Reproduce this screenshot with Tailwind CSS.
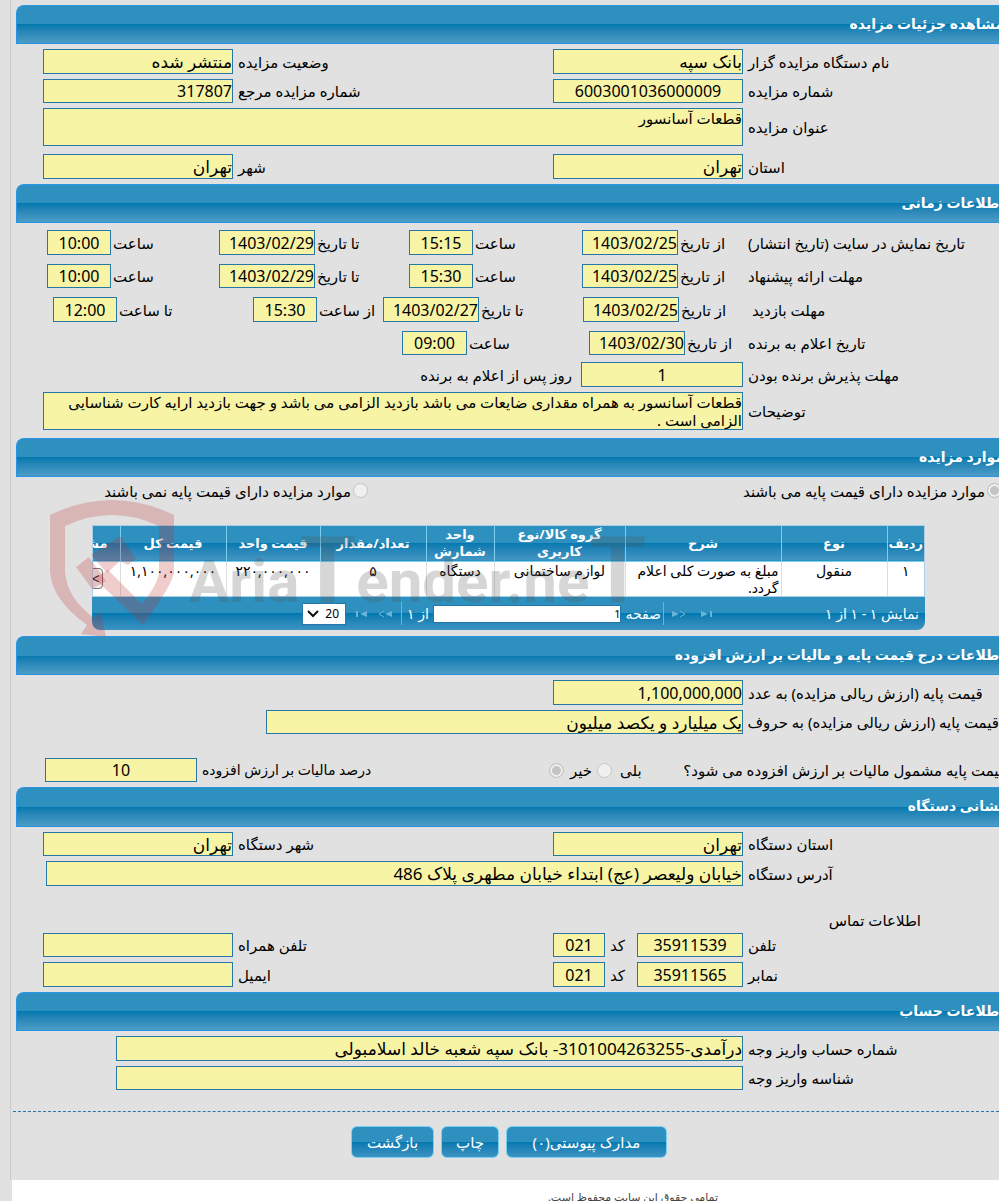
<!DOCTYPE html>
<html lang="fa">
<head>
    <meta charset="UTF-8">
    <meta name="viewport" content="width=device-width, initial-scale=1.0">
    <title>مشاهده جزئیات مزایده</title>
    <script src="https://cdn.jsdelivr.net/npm/@tailwindcss/browser@4"></script>
</head>
<body class="bg-[#e1e1e1] overflow-x-hidden text-black text-[15px] leading-5 font-['Noto_Sans','DejaVu_Sans',sans-serif]">
    <main class="ml-[10px] border-l border-[#c8c8c8] pt-[5px] pl-[5px]">

        <!-- Detail -->
        <section dir="rtl">
            <h2 class="h-[39px] rounded-tl-lg border border-r-0 border-[#2a94e4] bg-linear-to-b from-[#2e90bf] from-50% via-[#0079b0] via-50% to-[#4a9cc5] text-white text-sm font-bold leading-9"><span class="block -mr-[5px]">مشاهده جزئیات مزایده</span></h2>
            <div class="flex flex-col gap-[5px] pt-[5px] pb-[5px] pl-[27px]">
                <div class="flex items-center gap-[5px]">
                    <label for="org" class="w-[251px] shrink-0 text-left whitespace-nowrap">نام دستگاه مزایده گزار</label>
                    <input id="org" readonly value="بانک سپه" class="w-[190px] h-[25px] bg-[#f7f4a5] border border-[#2676a8] text-[17px]">
                    <label for="status" class="flex-1 text-left">وضعیت مزایده</label>
                    <input id="status" readonly value="منتشر شده" class="w-[190px] h-[25px] bg-[#f7f4a5] border border-[#2676a8] text-[17px]">
                </div>
                <div class="flex items-center gap-[5px]">
                    <label for="number" class="w-[251px] shrink-0 text-left whitespace-nowrap">شماره مزایده</label>
                    <input id="number" readonly value="6003001036000009" class="w-[190px] h-[24px] bg-[#f7f4a5] border border-[#2676a8] text-base text-center">
                    <label for="ref" class="flex-1 text-left">شماره مزایده مرجع</label>
                    <input id="ref" readonly value="317807" class="w-[190px] h-[24px] bg-[#f7f4a5] border border-[#2676a8] text-base">
                </div>
                <div class="flex items-center gap-[5px]">
                    <label for="title" class="w-[251px] shrink-0 text-left whitespace-nowrap">عنوان مزایده</label>
                    <textarea id="title" readonly class="flex-1 h-[38px] bg-[#f7f4a5] border border-[#2676a8] resize-none overflow-hidden leading-[18px]">قطعات آسانسور</textarea>
                </div>
                <div class="flex items-center gap-[5px] pt-[3px]">
                    <label for="province" class="w-[251px] shrink-0 text-left whitespace-nowrap">استان</label>
                    <input id="province" readonly value="تهران" class="w-[190px] h-[25px] bg-[#f7f4a5] border border-[#2676a8] text-[17px]">
                    <label for="city" class="flex-1 text-left">شهر</label>
                    <input id="city" readonly value="تهران" class="w-[190px] h-[25px] bg-[#f7f4a5] border border-[#2676a8] text-[17px]">
                </div>
            </div>
        </section>

        <!-- Dates -->
        <section dir="rtl">
            <h2 class="h-[39px] rounded-tl-lg border border-r-0 border-[#2a94e4] bg-linear-to-b from-[#2e90bf] from-50% via-[#0079b0] via-50% to-[#4a9cc5] text-white text-sm font-bold leading-9"><span class="block -mr-[5px]">اطلاعات زمانی</span></h2>
            <div class="pt-[7px] pb-2 pl-[27px]">
                <div class="flex items-center h-[25px] mb-[9px]">
                    <span class="w-[251px] shrink-0 text-left whitespace-nowrap">تاریخ نمایش در سایت (تاریخ انتشار)</span>
                    <label for="pub-from" class="w-[70px] pl-[2px] text-left">از تاریخ</label>
                    <input id="pub-from" readonly value="1403/02/25" class="w-[96px] h-[25px] bg-[#f7f4a5] border border-[#2676a8] text-base">
                    <label for="pub-from-time" class="w-[109px] pl-[2px] text-left">ساعت</label>
                    <input id="pub-from-time" readonly value="15:15" class="w-[64px] h-[25px] bg-[#f7f4a5] border border-[#2676a8] text-base text-center">
                    <label for="pub-to" class="w-[94px] pl-[2px] text-left">تا تاریخ</label>
                    <input id="pub-to" readonly value="1403/02/29" class="w-[96px] h-[25px] bg-[#f7f4a5] border border-[#2676a8] text-base">
                    <label for="pub-to-time" class="w-[108px] pl-[2px] text-left">ساعت</label>
                    <input id="pub-to-time" readonly value="10:00" class="w-[64px] h-[25px] bg-[#f7f4a5] border border-[#2676a8] text-base text-center">
                </div>
                <div class="flex items-center h-[24px] mb-[9px]">
                    <span class="w-[251px] shrink-0 text-left whitespace-nowrap">مهلت ارائه پیشنهاد</span>
                    <label for="bid-from" class="w-[70px] pl-[2px] text-left">از تاریخ</label>
                    <input id="bid-from" readonly value="1403/02/25" class="w-[96px] h-[24px] bg-[#f7f4a5] border border-[#2676a8] text-base">
                    <label for="bid-from-time" class="w-[109px] pl-[2px] text-left">ساعت</label>
                    <input id="bid-from-time" readonly value="15:30" class="w-[64px] h-[24px] bg-[#f7f4a5] border border-[#2676a8] text-base text-center">
                    <label for="bid-to" class="w-[94px] pl-[2px] text-left">تا تاریخ</label>
                    <input id="bid-to" readonly value="1403/02/29" class="w-[96px] h-[24px] bg-[#f7f4a5] border border-[#2676a8] text-base">
                    <label for="bid-to-time" class="w-[108px] pl-[2px] text-left">ساعت</label>
                    <input id="bid-to-time" readonly value="10:00" class="w-[64px] h-[24px] bg-[#f7f4a5] border border-[#2676a8] text-base text-center">
                </div>
                <div class="flex items-center h-[25px] mb-[9px]">
                    <span class="w-[251px] shrink-0 pl-1 text-left whitespace-nowrap">مهلت بازدید</span>
                    <label for="visit-from" class="w-[69px] pl-[2px] text-left">از تاریخ</label>
                    <input id="visit-from" readonly value="1403/02/25" class="w-[96px] h-[25px] bg-[#f7f4a5] border border-[#2676a8] text-base">
                    <label for="visit-to" class="w-[104px] pl-[2px] text-left">تا تاریخ</label>
                    <input id="visit-to" readonly value="1403/02/27" class="w-[96px] h-[25px] bg-[#f7f4a5] border border-[#2676a8] text-base">
                    <label for="visit-from-time" class="w-[66px] pl-[2px] text-left">از ساعت</label>
                    <input id="visit-from-time" readonly value="15:30" class="w-[64px] h-[25px] bg-[#f7f4a5] border border-[#2676a8] text-base text-center">
                    <label for="visit-to-time" class="w-[136px] pl-[2px] text-left">تا ساعت</label>
                    <input id="visit-to-time" readonly value="12:00" class="w-[64px] h-[25px] bg-[#f7f4a5] border border-[#2676a8] text-base text-center">
                </div>
                <div class="flex items-center h-[24px] mb-[7px]">
                    <span class="w-[251px] shrink-0 text-left whitespace-nowrap">تاریخ اعلام به برنده</span>
                    <label for="win-from" class="w-[63px] pl-[2px] text-left">از تاریخ</label>
                    <input id="win-from" readonly value="1403/02/30" class="w-[96px] h-[24px] bg-[#f7f4a5] border border-[#2676a8] text-base">
                    <label for="win-time" class="w-[122px] pl-[2px] text-left">ساعت</label>
                    <input id="win-time" readonly value="09:00" class="w-[65px] h-[24px] bg-[#f7f4a5] border border-[#2676a8] text-base text-center">
                </div>
                <div class="flex items-center gap-[5px] mb-[5px]">
                    <label for="accept" class="w-[251px] shrink-0 text-left whitespace-nowrap">مهلت پذیرش برنده بودن</label>
                    <input id="accept" readonly value="1" class="w-[162px] h-[25px] bg-[#f7f4a5] border border-[#2676a8] text-base text-center">
                    <span class="pr-1">روز پس از اعلام به برنده</span>
                </div>
                <div class="flex items-center gap-[5px]">
                    <label for="notes" class="w-[251px] shrink-0 text-left whitespace-nowrap">توضیحات</label>
                    <textarea id="notes" readonly class="flex-1 h-[38px] bg-[#f7f4a5] border border-[#2676a8] resize-none overflow-hidden leading-[18px]">قطعات آسانسور به همراه مقداری ضایعات می باشد بازدید الزامی می باشد و جهت بازدید ارایه کارت شناسایی الزامی است .</textarea>
                </div>
            </div>
        </section>

        <!-- Items -->
        <section dir="rtl" class="relative">
            <h2 class="h-[39px] rounded-tl-lg border border-r-0 border-[#2a94e4] bg-linear-to-b from-[#2e90bf] from-50% via-[#0079b0] via-50% to-[#4a9cc5] text-white text-sm font-bold leading-9"><span class="block -mr-[5px]">موارد مزایده</span></h2>
            <div class="flex items-center h-[27px] -mr-[3px]">
                <label class="flex w-[634px] items-center gap-[2px] whitespace-nowrap">
                    <input type="radio" name="base" checked disabled class="appearance-none size-[15px] rounded-full border border-[#c4c4c4] bg-[#c4c4c4] ring-2 ring-inset ring-[#f0f0f0] shrink-0">
                    موارد مزایده دارای قیمت پایه می باشند
                </label>
                <label class="flex items-center gap-[2px] whitespace-nowrap">
                    <input type="radio" name="base" disabled class="appearance-none size-[15px] rounded-full border border-[#c4c4c4] bg-[#f0f0f0] shrink-0">
                    موارد مزایده دارای قیمت پایه نمی باشند
                </label>
            </div>

            <div class="mt-[21px] mr-[74px] ml-[76px]">
                <div class="overflow-hidden border border-[#a9cfe6]">
                    <table class="w-[856px] table-fixed border-collapse text-sm leading-[17px]">
                        <colgroup>
                            <col class="w-[37px]"><col class="w-[106px]"><col class="w-[156px]"><col class="w-[131px]"><col class="w-[68px]"><col class="w-[106px]"><col class="w-[94px]"><col class="w-[106px]"><col class="w-[52px]">
                        </colgroup>
                        <thead>
                            <tr class="h-[35px] text-white text-[13px] leading-[17px] bg-linear-to-b from-[#2e90bf] from-50% via-[#0079b0] via-50% to-[#4195c2] border-b border-[#79d0f3]">
                                <th class="p-0 border-l border-[#79d0f3]">ردیف</th>
                                <th class="p-0 border-l border-[#79d0f3]">نوع</th>
                                <th class="p-0 border-l border-[#79d0f3]">شرح</th>
                                <th class="px-4 py-0 border-l border-[#79d0f3]">گروه کالا/نوع کاربری</th>
                                <th class="p-0 border-l border-[#79d0f3]">واحد شمارش</th>
                                <th class="p-0 border-l border-[#79d0f3]">تعداد/مقدار</th>
                                <th class="p-0 border-l border-[#79d0f3]">قیمت واحد</th>
                                <th class="p-0 border-l border-[#79d0f3]">قیمت کل</th>
                                <th class="py-0 pl-0 pr-3 text-right whitespace-nowrap">مشاهده</th>
                            </tr>
                        </thead>
                        <tbody>
                            <tr class="h-[35px] bg-white align-top text-center">
                                <td class="border-l border-[#dddddd]">۱</td>
                                <td class="border-l border-[#dddddd]">منقول</td>
                                <td class="border-l border-[#dddddd] px-[2px] text-right">مبلغ به صورت کلی اعلام گردد.</td>
                                <td class="border-l border-[#dddddd]">لوازم ساختمانی</td>
                                <td class="border-l border-[#dddddd]">دستگاه</td>
                                <td class="border-l border-[#dddddd]">۵</td>
                                <td class="border-l border-[#dddddd]">۲۲۰,۰۰۰,۰۰۰</td>
                                <td class="border-l border-[#dddddd]">۱,۱۰۰,۰۰۰,۰۰۰</td>
                                <td class="pt-[6px] pr-[17px] text-right"><button class="w-[30px] h-[21px] rounded-sm border border-[#777777] bg-[#efefef] pr-[2px] text-right">&gt;</button></td>
                            </tr>
                        </tbody>
                    </table>
                </div>
                <div class="flex items-center h-[33px] rounded-b-lg bg-linear-to-b from-[#2e90bf] from-50% via-[#0079b0] via-50% to-[#3a93c2] pr-[6px] text-white text-sm">
                    <span class="w-[206px] whitespace-nowrap">نمایش ۱ - ۱ از ۱</span>
                    <button aria-label="صفحه آخر" class="ml-[15px]"><svg width="12" height="8" viewBox="0 0 12 8" fill="#6bb4d8"><path d="M0 1l7 3-7 3zM9 1h2v6H9z"/></svg></button>
                    <button aria-label="صفحه بعد" class="ml-[8px]"><svg width="14" height="8" viewBox="0 0 14 8" fill="#6bb4d8"><path d="M0 1l7 3-7 3z"/><path d="M8 1l5 3-5 3" fill="none" stroke="#6bb4d8"/></svg></button>
                    <span class="h-[23px] w-px bg-[#6bb4d8] ml-[2px]"></span>
                    <label for="page" class="ml-1">صفحه</label>
                    <input id="page" value="1" class="min-w-0 flex-1 h-[18px] border border-[#2676a8] bg-white text-black text-[11px]">
                    <span class="mr-1">از ۱</span>
                    <span class="h-[23px] w-px bg-[#6bb4d8] mr-[5px] ml-[9px]"></span>
                    <button aria-label="صفحه قبل" class="ml-[11px]"><svg width="14" height="8" viewBox="0 0 14 8" fill="#6bb4d8"><path d="M14 1L7 4l7 3z"/><path d="M6 1L1 4l5 3" fill="none" stroke="#6bb4d8"/></svg></button>
                    <button aria-label="صفحه اول" class="ml-[9px]"><svg width="12" height="8" viewBox="0 0 12 8" fill="#6bb4d8"><path d="M12 1L5 4l7 3zM1 1h2v6H1z"/></svg></button>
                    <div class="relative ml-[210px]">
                        <select aria-label="تعداد در صفحه" class="block appearance-none w-[44px] h-[22px] border border-[#2676a8] bg-white pr-[6px] text-black text-xs"><option>20</option></select>
                        <svg class="absolute left-[5px] top-[7px] pointer-events-none" width="12" height="8" viewBox="0 0 12 8"><path d="M1 1l5 5 5-5" fill="none" stroke="#111111" stroke-width="2"/></svg>
                    </div>
                </div>
            </div>

            <svg class="absolute left-[24px] top-[52px] pointer-events-none [direction:ltr]" width="620" height="155" viewBox="0 0 620 155">
                <g fill="#c03030" fill-opacity=".24">
                    <path d="M10 25Q72 -5 134 25V82Q133 94 103 135L54 88L68 80L102 114Q118 94 119 82V36Q72 14 25 36V82Q27 108 54 128L61 122L66 147L41 144L47 135Q12 110 10 82Z"/>
                    <path d="M36 77L49 67L66 91L52 99ZM51 65L80 46L96 69L88 75L80 71L67 83Z"/>
                </g>
                <text x="149" y="112" fill="#555555" fill-opacity=".24" class="font-[Roboto,sans-serif] font-bold text-[60px]">Aria<tspan class="text-[92px]">T</tspan>ender.ne<tspan class="text-[92px]">T</tspan></text>
            </svg>
        </section>

        <!-- Base price -->
        <section dir="rtl" class="mt-[6px]">
            <h2 class="h-[39px] rounded-tl-lg border border-r-0 border-[#2a94e4] bg-linear-to-b from-[#2e90bf] from-50% via-[#0079b0] via-50% to-[#4a9cc5] text-white text-sm font-bold leading-9"><span class="block -mr-[5px]">اطلاعات درج قیمت پایه و مالیات بر ارزش افزوده</span></h2>
            <div class="pt-[5px] pb-[5px] pl-[27px]">
                <div class="flex items-center gap-[5px] mb-[5px]">
                    <label for="price" class="w-[251px] shrink-0 text-left whitespace-nowrap">قیمت پایه (ارزش ریالی مزایده) به عدد</label>
                    <input id="price" readonly value="1,100,000,000" class="w-[190px] h-[25px] bg-[#f7f4a5] border border-[#2676a8] text-base">
                </div>
                <div class="flex items-center gap-[5px] mb-6">
                    <label for="price-words" class="w-[251px] shrink-0 text-left whitespace-nowrap">قیمت پایه (ارزش ریالی مزایده) به حروف</label>
                    <input id="price-words" readonly value="یک میلیارد و یکصد میلیون" class="w-[477px] h-[24px] bg-[#f7f4a5] border border-[#2676a8] text-[17px]">
                </div>
                <div class="flex items-center gap-[5px] pl-[2px]">
                    <span class="w-[321px] -mr-[7px] shrink-0 whitespace-nowrap">قیمت پایه مشمول مالیات بر ارزش افزوده می شود؟</span>
                    <label class="flex w-[83px] items-center justify-end gap-2 whitespace-nowrap">بلی
                        <input type="radio" name="vat" disabled class="appearance-none size-[15px] rounded-full border border-[#c4c4c4] bg-[#f0f0f0] shrink-0">
                    </label>
                    <label class="flex items-center gap-[6px] whitespace-nowrap">خیر
                        <input type="radio" name="vat" checked disabled class="appearance-none size-[15px] rounded-full border border-[#c4c4c4] bg-[#c4c4c4] ring-2 ring-inset ring-[#f0f0f0] shrink-0">
                    </label>
                    <label for="vat-rate" class="flex-1 text-left text-sm">درصد مالیات بر ارزش افزوده</label>
                    <input id="vat-rate" readonly value="10" class="w-[152px] h-[24px] bg-[#f7f4a5] border border-[#2676a8] text-base text-center">
                </div>
            </div>
        </section>

        <!-- Address -->
        <section dir="rtl">
            <h2 class="h-[40px] rounded-tl-lg border border-r-0 border-[#2a94e4] bg-linear-to-b from-[#2e90bf] from-50% via-[#0079b0] via-50% to-[#4a9cc5] text-white text-sm font-bold leading-9"><span class="block -mr-[5px]">نشانی دستگاه</span></h2>
            <div class="flex flex-col gap-[5px] pt-[5px] pb-[5px] pl-[27px]">
                <div class="flex items-center gap-[5px]">
                    <label for="org-province" class="w-[251px] shrink-0 text-left whitespace-nowrap">استان دستگاه</label>
                    <input id="org-province" readonly value="تهران" class="w-[190px] h-[24px] bg-[#f7f4a5] border border-[#2676a8] text-[17px]">
                    <label for="org-city" class="flex-1 text-left">شهر دستگاه</label>
                    <input id="org-city" readonly value="تهران" class="w-[190px] h-[24px] bg-[#f7f4a5] border border-[#2676a8] text-[17px]">
                </div>
                <div class="flex items-center gap-[5px] pl-[3px]">
                    <label for="address" class="w-[251px] shrink-0 text-left whitespace-nowrap">آدرس دستگاه</label>
                    <input id="address" readonly value="خیابان ولیعصر (عج) ابتداء خیابان مطهری پلاک 486" class="flex-1 h-[25px] bg-[#f7f4a5] border border-[#2676a8] text-[17px]">
                </div>
                <h3 class="pt-[19px] pr-[78px]">اطلاعات تماس</h3>
                <div class="flex items-center gap-[5px] -mt-[2px]">
                    <label for="phone" class="w-[251px] shrink-0 text-left whitespace-nowrap">تلفن</label>
                    <input id="phone" readonly value="35911539" class="w-[106px] h-[24px] bg-[#f7f4a5] border border-[#2676a8] text-base text-center">
                    <label for="phone-code" class="w-[22px] text-left">کد</label>
                    <input id="phone-code" readonly value="021" class="w-[52px] h-[24px] bg-[#f7f4a5] border border-[#2676a8] text-base text-center">
                    <label for="mobile" class="flex-1 text-left">تلفن همراه</label>
                    <input id="mobile" readonly class="w-[190px] h-[24px] bg-[#f7f4a5] border border-[#2676a8] text-base">
                </div>
                <div class="flex items-center gap-[5px]">
                    <label for="fax" class="w-[251px] shrink-0 text-left whitespace-nowrap">نمابر</label>
                    <input id="fax" readonly value="35911565" class="w-[106px] h-[25px] bg-[#f7f4a5] border border-[#2676a8] text-base text-center">
                    <label for="fax-code" class="w-[22px] text-left">کد</label>
                    <input id="fax-code" readonly value="021" class="w-[52px] h-[25px] bg-[#f7f4a5] border border-[#2676a8] text-base text-center">
                    <label for="email" class="flex-1 text-left">ایمیل</label>
                    <input id="email" readonly class="w-[190px] h-[25px] bg-[#f7f4a5] border border-[#2676a8] text-base">
                </div>
            </div>
        </section>

        <!-- Account -->
        <section dir="rtl">
            <h2 class="h-[39px] rounded-tl-lg border border-r-0 border-[#2a94e4] bg-linear-to-b from-[#2e90bf] from-50% via-[#0079b0] via-50% to-[#4a9cc5] text-white text-sm font-bold leading-9"><span class="block -mr-[5px]">اطلاعات حساب</span></h2>
            <div class="flex flex-col gap-[5px] pt-[5px] pb-[21px] pl-[100px]">
                <div class="flex items-center gap-[5px]">
                    <label for="account" class="w-[251px] shrink-0 text-left whitespace-nowrap">شماره حساب واریز وجه</label>
                    <input id="account" readonly value="درآمدی-3101004263255- بانک سپه شعبه خالد اسلامبولی" class="flex-1 h-[25px] bg-[#f7f4a5] border border-[#2676a8] text-[17px]">
                </div>
                <div class="flex items-center gap-[5px]">
                    <label for="account-id" class="w-[251px] shrink-0 text-left whitespace-nowrap">شناسه واریز وجه</label>
                    <input id="account-id" readonly class="flex-1 h-[24px] bg-[#f7f4a5] border border-[#2676a8] text-base">
                </div>
            </div>
        </section>

        <div dir="rtl" class="-ml-[3px] flex justify-center gap-[7px] border-t border-dashed border-[#2676a8] pt-[14px] pb-[22px] pl-[6px] text-white">
            <button class="h-8 w-[161px] rounded-md border border-[#79d0f3] bg-linear-to-b from-[#2e90bf] from-50% via-[#0079b0] via-50% to-[#3a93c2]">مدارک پیوستی(۰)</button>
            <button class="h-8 w-[58px] rounded-md border border-[#79d0f3] bg-linear-to-b from-[#2e90bf] from-50% via-[#0079b0] via-50% to-[#3a93c2]">چاپ</button>
            <button class="h-8 w-[83px] rounded-md border border-[#79d0f3] bg-linear-to-b from-[#2e90bf] from-50% via-[#0079b0] via-50% to-[#3a93c2]">بازگشت</button>
        </div>
    </main>
    <footer dir="rtl" class="ml-[12px] h-[21px] overflow-hidden bg-white pt-[7px] pr-[281px] text-[11px] text-[#444444]">تمامی حقوق این سایت محفوظ است.</footer>
</body>
</html>
